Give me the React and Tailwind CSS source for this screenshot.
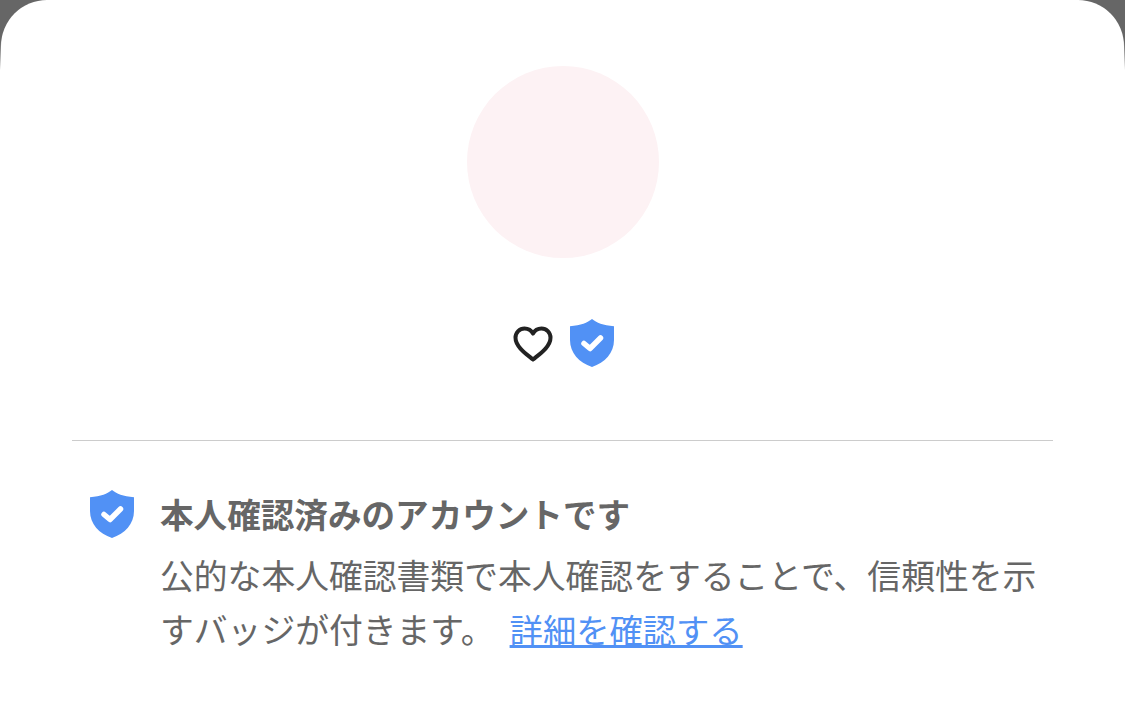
const FONT = "font-['Noto_Sans_CJK_JP','Noto_Sans',sans-serif]";

function Shield({ className }) {
  return (
    <svg viewBox="0 0 44 48" className={className}>
      <path
        d="M22 0C26.5 3.8 33 6.3 44 7.2V21C44 34 35 43.5 22 48C9 43.5 0 34 0 21V7.2C11 6.3 17.5 3.8 22 0Z"
        fill="#5191f5"
      />
      <path
        d="M14 24.5L20 29.5L30.5 19"
        fill="none"
        stroke="#fff"
        strokeWidth="5.5"
        strokeLinecap="round"
        strokeLinejoin="round"
      />
    </svg>
  );
}

function Heart() {
  return (
    <svg viewBox="0 0 40 36" className="w-[40px] h-[36px] translate-y-[1px]">
      <path
        d="M20 33.5C14 28.5 2.5 21 2.5 11.8C2.5 6.5 6.6 2.5 11.5 2.5C15 2.5 18.3 4.4 20 7.6C21.7 4.4 25 2.5 28.5 2.5C33.4 2.5 37.5 6.5 37.5 11.8C37.5 21 26 28.5 20 33.5Z"
        fill="none"
        stroke="#222222"
        strokeWidth="4"
        strokeLinejoin="round"
      />
    </svg>
  );
}

export default function App() {
  return (
    <div className={`h-[717px] overflow-hidden px-[1px] bg-[linear-gradient(#666666_0,#666666_42px,#ffffff_70px)] ${FONT}`}>
      <div className="h-full bg-white rounded-t-[46px] flex flex-col pt-[66px] px-[71px]">
        <div className="w-[192px] h-[192px] rounded-full bg-[#fdf2f4] mx-auto" />

        <div className="flex items-center justify-center gap-[17px] mt-[61px] h-[48px] pl-[2px]">
          <Heart />
          <Shield className="w-[44px] h-[48px]" />
        </div>

        <div className="border-t border-[#cccccc] mt-[73px]" />

        <div className="flex mt-[49px] pl-[18px] gap-[27px]">
          <Shield className="w-[44px] h-[48px] shrink-0" />
          <div className="flex-1 -mt-[1px] -ml-[1px]">
            <div className="text-[33.6px] leading-[50px] font-semibold text-[#666666] whitespace-nowrap">
              本人確認済みのアカウントです
            </div>
            <p className="text-[33.8px] leading-[54px] text-[#666666] mt-[9px] w-[880px]">
              公的な本人確認書類で本人確認をすることで、信頼性を示すバッジが付きます。
              <a href="#" className="text-[#5191f5] text-[33.3px] underline ml-[15px]">詳細を確認する</a>
            </p>
          </div>
        </div>
      </div>
    </div>
  );
}
